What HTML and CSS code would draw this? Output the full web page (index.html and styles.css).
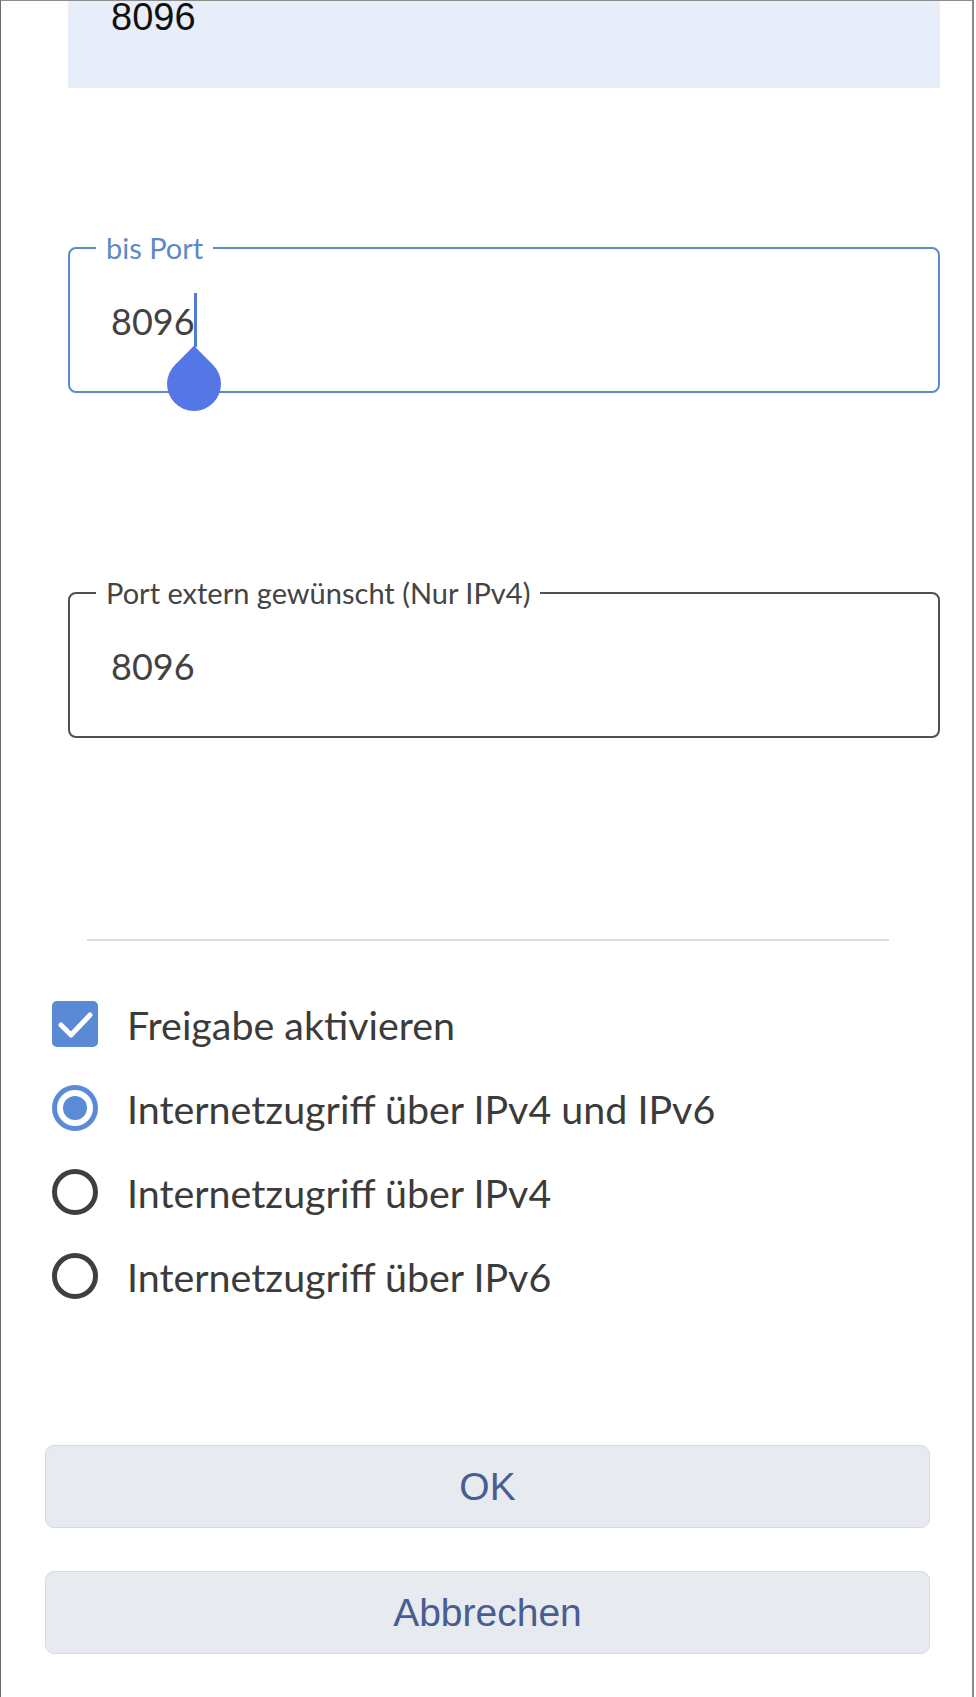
FILE: index.html
```html
<!DOCTYPE html>
<html lang="de">
<head>
<meta charset="utf-8">
<title>Portfreigabe</title>
<link rel="stylesheet" href="styles.css">
</head>
<body>
<div class="screen">
  <div class="topfield"><span class="topvalue">8096</span></div>

  <fieldset class="field field-active">
    <legend>bis Port</legend>
    <div class="value"><span class="editing">8096<span class="caret"></span><span class="handle"></span></span></div>
  </fieldset>

  <fieldset class="field">
    <legend>Port extern gewünscht (Nur IPv4)</legend>
    <div class="value">8096</div>
  </fieldset>

  <hr class="divider">

  <div class="options">
    <div class="option">
      <span class="checkbox"><svg viewBox="0 0 46 46" width="46" height="46"><path d="M9 24 L19 34 L38 14" fill="none" stroke="#fff" stroke-width="5" stroke-linecap="round" stroke-linejoin="round"/></svg></span>
      <span class="option-text">Freigabe aktivieren</span>
    </div>
    <div class="option">
      <span class="radio radio-checked"><span class="dot"></span></span>
      <span class="option-text">Internetzugriff über IPv4 und IPv6</span>
    </div>
    <div class="option">
      <span class="radio"></span>
      <span class="option-text">Internetzugriff über IPv4</span>
    </div>
    <div class="option">
      <span class="radio"></span>
      <span class="option-text">Internetzugriff über IPv6</span>
    </div>
  </div>

  <div class="buttons">
    <button class="btn">OK</button>
    <button class="btn">Abbrechen</button>
  </div>
</div>
</body>
</html>
```

FILE: styles.css
```css
html, body {
  margin: 0;
  padding: 0;
  background: #ffffff;
}

body {
  width: 976px;
  height: 1697px;
  overflow: hidden;
  font-family: "Lato", "Open Sans", sans-serif;
}

.screen {
  box-sizing: border-box;
  width: 974px;
  height: 1697px;
  border-top: 1px solid #8c8c8c;
  border-left: 1px solid #6a6a6a;
  border-right: 2px solid #8a8a8a;
  display: flex;
  flex-direction: column;
  align-items: flex-start;
}

.topfield {
  box-sizing: border-box;
  margin-left: 67px;
  width: 872px;
  height: 87px;
  padding-left: 43px;
  background: #e8eef9;
  overflow: hidden;
}

.topvalue {
  display: block;
  margin-top: -2px;
  font-family: "Liberation Sans", Arial, sans-serif;
  font-size: 38px;
  line-height: 36px;
  color: #111111;
}

.field {
  box-sizing: border-box;
  width: 872px;
  margin: 142px 0 0 67px;
  padding: 0;
  border: 2px solid #505050;
  border-radius: 8px;
  min-width: 0;
}

.field + .field {
  margin-top: 182px;
}

.field legend {
  margin-left: 26px;
  padding: 0 10px;
  font-size: 29px;
  line-height: 36px;
  color: #444444;
}

.field-active {
  border-color: #5e8acb;
}

.field-active legend {
  color: #5d89c8;
}

.value {
  padding: 33px 0 48px 41px;
  font-size: 36px;
  line-height: 44px;
  color: #424242;
}

.editing {
  position: relative;
  display: inline-block;
}

.caret {
  position: absolute;
  right: -2px;
  top: -6px;
  width: 3px;
  height: 54px;
  background: #4f7bd2;
}

.handle {
  position: absolute;
  right: -26px;
  top: 58px;
  width: 54px;
  height: 54px;
  background: #5577e6;
  border-radius: 0 50% 50% 50%;
  transform: rotate(45deg);
}

.divider {
  box-sizing: border-box;
  width: 802px;
  height: 2px;
  margin: 201px 0 0 86px;
  border: 0;
  background: #dddddd;
}

.options {
  margin-top: 41px;
  padding-left: 51px;
  display: flex;
  flex-direction: column;
}

.option {
  height: 84px;
  display: flex;
  align-items: center;
  gap: 29px;
}

.option-text {
  font-size: 39.4px;
  color: #3b3b3b;
}

.checkbox {
  width: 46px;
  height: 46px;
  border-radius: 5px;
  background: #5a8ad6;
  display: flex;
}

.radio {
  box-sizing: border-box;
  width: 46px;
  height: 46px;
  border: 5px solid #3c4043;
  border-radius: 50%;
  display: flex;
  align-items: center;
  justify-content: center;
}

.radio-checked {
  border-color: #5b8ad7;
}

.dot {
  width: 24px;
  height: 24px;
  border-radius: 50%;
  background: #5b8ad7;
}

.buttons {
  margin: 127px 0 0 44px;
  display: flex;
  flex-direction: column;
  gap: 43px;
}

.btn {
  box-sizing: border-box;
  width: 885px;
  height: 83px;
  background: #e7ebef;
  border: 1px solid #d5dbe0;
  border-radius: 9px;
  color: #4a5d92;
  font-family: "Liberation Sans", Arial, sans-serif;
  font-size: 39px;
  padding: 0;
}
```
